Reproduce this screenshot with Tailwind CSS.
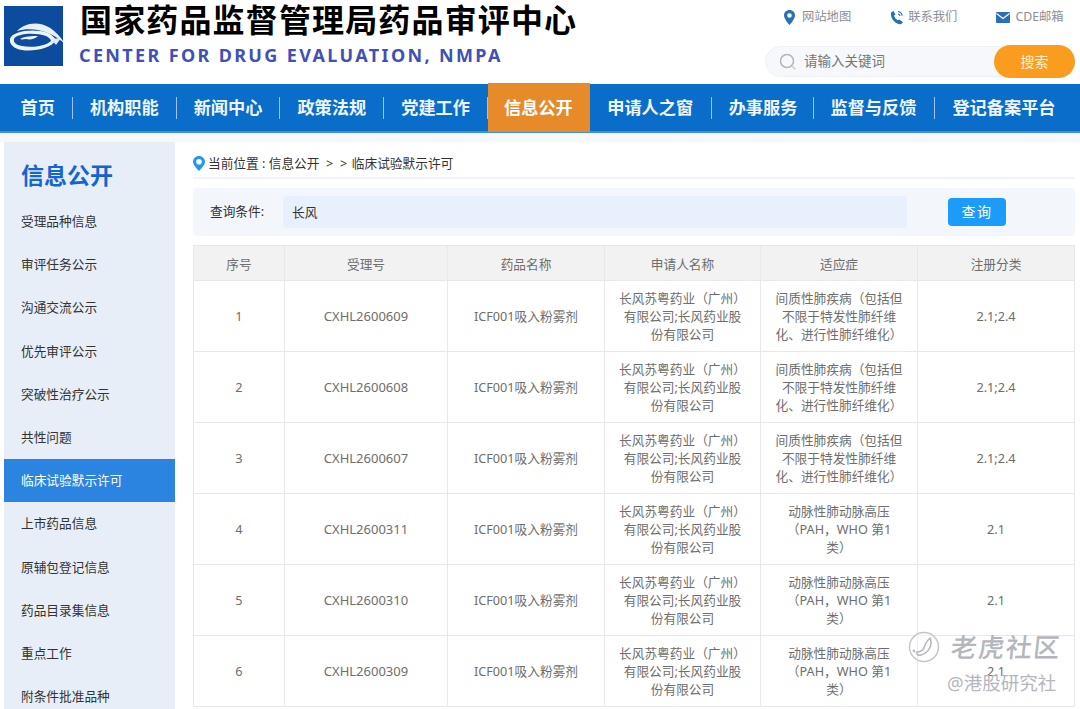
<!DOCTYPE html>
<html lang="zh-CN">
<head>
  <meta charset="UTF-8" />
  <meta name="viewport" content="width=device-width, initial-scale=1" />
  <title>国家药品监督管理局药品审评中心</title>
  <script src="https://cdn.jsdelivr.net/npm/@tailwindcss/browser@4"></script>
</head>
<body class="relative h-[709px] overflow-hidden bg-white font-['Noto_Sans','Noto_Sans_CJK_SC',sans-serif] text-[12.700px] text-[#333]">

  <!-- Header -->
  <header class="flex h-[84px] justify-between">
    <div class="flex pl-1 pt-1.5">
      <svg class="h-[60px] w-[59px] shrink-0 overflow-visible" viewBox="0 0 59 60">
        <rect width="59" height="60" fill="#0d4b9f" />
        <path d="M13 25C22 15 45 11 61 38 48 26 30 20 13 25z" fill="#e8eff7" />
        <path fill-rule="evenodd" d="M6 33C8 25 30 22 44 27c4 2 6 4 8 7-4 8-22 12-34 10C10 43 5 38 6 33zm4 0c2-5 20-7 32-3 4 2 5 4 5 5-5 5-19 7-29 5-6-1-9-4-8-7z" fill="#eef3f8" />
        <path d="M47 33l10-1-5 7z" fill="#dfe8f2" />
        <path d="M16 33c5-3 12-3 18-3-3 3-8 4-12 3-2 0-4 1-6 0z" fill="#eef3f8" />
      </svg>
      <div class="pl-[17px]">
        <div class="-mt-[5px] text-[32px] leading-[38px] font-bold tracking-[1.150px] text-black">国家药品监督管理局药品审评中心</div>
        <div class="mt-[4px] -ml-px text-[18px] leading-[24px] font-bold tracking-[2.350px] text-[#3f51b5]">CENTER FOR DRUG EVALUATION, NMPA</div>
      </div>
    </div>
    <div class="flex w-[315px] flex-col pr-[5px]">
      <div class="flex h-[46px] items-start pt-2 text-[12.300px] text-[#8a8f99]">
        <span class="ml-[19px] flex items-center gap-[7px]">
          <svg class="h-[15px] w-[11px]" viewBox="0 0 11 15"><path fill-rule="evenodd" d="M5.500 0C2.400 0 0 2.400 0 5.400 0 9 5.500 15 5.500 15S11 9 11 5.400C11 2.400 8.600 0 5.500 0zm0 3.200a2.300 2.300 0 1 1 0 4.600 2.300 2.300 0 0 1 0-4.600z" fill="#2a70b8"/></svg>
          网站地图
        </span>
        <span class="ml-[39px] flex items-center gap-1">
          <svg class="h-[15px] w-[14px]" viewBox="0 0 14 15"><path d="M1 2.500 3.500 1l2 3.500-1.500 1.200c.6 1.800 1.800 3.300 3.700 4.500L9.300 9.500l3.700 2.700-2 2C5.500 14.500 0 8.500 1 2.500z" fill="#2a70b8"/><path d="M8 1.500c2.200.3 3.800 2 4.200 4.200M8 4c1 .2 1.800 1 2 2" fill="none" stroke="#2a70b8" stroke-width="1.200"/></svg>
          联系我们
        </span>
        <span class="ml-[39px] flex items-center gap-[5px]">
          <svg class="h-[11px] w-[14px]" viewBox="0 0 14 11"><rect width="14" height="11" rx="1" fill="#2a70b8"/><path d="M.5 1.500 7 6.500l6.500-5" fill="none" stroke="#fff" stroke-width="1.200"/></svg>
          CDE邮箱
        </span>
      </div>
      <div class="flex h-[31px] items-center justify-between rounded-full border border-[#eef1f5] bg-[#f6f8fb]">
        <div class="flex items-center">
          <svg class="ml-[13px] h-[18px] w-[18px]" viewBox="0 0 18 18"><circle cx="8" cy="8" r="6.500" fill="none" stroke="#b5b5b5" stroke-width="1.500"/><path d="M13 13l3.500 3.500" stroke="#cfcfcf" stroke-width="1.500"/></svg>
          <span class="ml-[7px] text-[13.500px] text-[#777]">请输入关键词</span>
        </div>
        <button class="-mr-px h-[33px] w-[81px] rounded-full bg-[#fa9d1e] text-sm text-[#fdf1dc]">搜索</button>
      </div>
    </div>
  </header>

  <!-- Nav -->
  <nav class="flex h-[49px] items-center border-b-2 border-[#3f8fdc] bg-[#0a6dca] pl-[3.500px] text-[17.200px] leading-[49px] font-bold text-[#eef5fc]">
    <a class="px-[17px]">首页</a><i class="h-[22px] w-px bg-white/60"></i>
    <a class="px-[17px]">机构职能</a><i class="h-[22px] w-px bg-white/60"></i>
    <a class="px-[17px]">新闻中心</a><i class="h-[22px] w-px bg-white/60"></i>
    <a class="px-[17px]">政策法规</a><i class="h-[22px] w-px bg-white/60"></i>
    <a class="px-[17px]">党建工作</a><i class="h-[22px] w-px bg-white/60"></i>
    <a class="h-[49px] bg-[#e68a2a] pr-[17px] pl-[16px] text-white">信息公开</a>
    <a class="px-[17.500px]">申请人之窗</a><i class="h-[22px] w-px bg-white/60"></i>
    <a class="pr-[16px] pl-[17px]">办事服务</a><i class="h-[22px] w-px bg-white/60"></i>
    <a class="pr-[18px] pl-[16px]">监督与反馈</a><i class="h-[22px] w-px bg-white/60"></i>
    <a class="px-[17px]">登记备案平台</a>
  </nav>

  <div class="h-[9px] bg-[#f5f9fe]"></div>

  <main class="flex pl-1">
    <!-- Sidebar -->
    <aside class="h-[567px] w-[171px] shrink-0 overflow-hidden bg-[#e7eef8]">
      <h2 class="h-[58px] pl-[17px] text-[23px] leading-[67px] font-bold text-[#1565d0]">信息公开</h2>
      <ul class="[&>li]:h-[43.200px] [&>li]:pl-[17px] [&>li]:leading-[43.200px]">
        <li>受理品种信息</li>
        <li>审评任务公示</li>
        <li>沟通交流公示</li>
        <li>优先审评公示</li>
        <li>突破性治疗公示</li>
        <li>共性问题</li>
        <li class="bg-[#2b84e0] text-white">临床试验默示许可</li>
        <li>上市药品信息</li>
        <li>原辅包登记信息</li>
        <li>药品目录集信息</li>
        <li>重点工作</li>
        <li>附条件批准品种</li>
      </ul>
    </aside>

    <!-- Content -->
    <section class="ml-[18px] w-[882px]">
      <div class="flex h-[37px] items-start gap-[3px] border-b-2 border-[#f3f4f6] pt-[12px] leading-[19px]">
        <svg class="mt-[2px] h-[15px] w-[12px]" viewBox="0 0 12 15"><path fill-rule="evenodd" d="M6 0C2.700 0 0 2.600 0 5.800 0 9.500 6 15 6 15s6-5.500 6-9.200C12 2.600 9.300 0 6 0zm0 3a2.800 2.800 0 1 1 0 5.600A2.800 2.800 0 0 1 6 3z" fill="#2196f3"/></svg>
        <span class="whitespace-pre">当前位置 : 信息公开  &gt;  &gt;  <span class="-ml-0.5">临床试验默示许可</span></span>
      </div>

      <div class="mt-[9px] flex h-[48px] items-center rounded-sm bg-[#f3f6fb] pl-[17px]">
        <span class="w-[73px]">查询条件:</span>
        <div class="h-[32px] w-[624px] rounded-sm bg-[#e8f0fd] pl-[9px] leading-[32px]">长风</div>
        <button class="ml-[41px] h-[28px] w-[58px] rounded-sm bg-[#1c9bfb] text-sm tracking-[1.500px] text-white">查询</button>
      </div>

      <table class="mt-[9px] w-[881px] table-fixed border-collapse text-center text-[#6e6e6e] [&_td]:border [&_td]:border-[#e8e8e8] [&_td]:px-[13px] [&_td]:leading-[18px] [&_th]:border [&_th]:border-[#e8e8e8] [&_th]:pt-[3px] [&_th]:font-normal">
        <colgroup>
          <col class="w-[91px]" /><col class="w-[163px]" /><col class="w-[157px]" /><col class="w-[156px]" /><col class="w-[157px]" /><col class="w-[157px]" />
        </colgroup>
        <thead>
          <tr class="h-[35px] bg-[#f2f2f2]"><th>序号</th><th>受理号</th><th>药品名称</th><th>申请人名称</th><th>适应症</th><th>注册分类</th></tr>
        </thead>
        <tbody>
          <tr class="h-[71px]"><td>1</td><td class="text-[13px]">CXHL2600609</td><td>ICF001吸入粉雾剂</td><td>长风苏粤药业（广州）有限公司;长风药业股份有限公司</td><td>间质性肺疾病（包括但不限于特发性肺纤维化、进行性肺纤维化）</td><td>2.1;2.4</td></tr>
          <tr class="h-[71px]"><td>2</td><td class="text-[13px]">CXHL2600608</td><td>ICF001吸入粉雾剂</td><td>长风苏粤药业（广州）有限公司;长风药业股份有限公司</td><td>间质性肺疾病（包括但不限于特发性肺纤维化、进行性肺纤维化）</td><td>2.1;2.4</td></tr>
          <tr class="h-[71px]"><td>3</td><td class="text-[13px]">CXHL2600607</td><td>ICF001吸入粉雾剂</td><td>长风苏粤药业（广州）有限公司;长风药业股份有限公司</td><td>间质性肺疾病（包括但不限于特发性肺纤维化、进行性肺纤维化）</td><td>2.1;2.4</td></tr>
          <tr class="h-[71px]"><td>4</td><td class="text-[13px]">CXHL2600311</td><td>ICF001吸入粉雾剂</td><td>长风苏粤药业（广州）有限公司;长风药业股份有限公司</td><td>动脉性肺动脉高压<br />（PAH，WHO 第1<br />类）</td><td>2.1</td></tr>
          <tr class="h-[71px]"><td>5</td><td class="text-[13px]">CXHL2600310</td><td>ICF001吸入粉雾剂</td><td>长风苏粤药业（广州）有限公司;长风药业股份有限公司</td><td>动脉性肺动脉高压<br />（PAH，WHO 第1<br />类）</td><td>2.1</td></tr>
          <tr class="h-[71px]"><td>6</td><td class="text-[13px]">CXHL2600309</td><td>ICF001吸入粉雾剂</td><td>长风苏粤药业（广州）有限公司;长风药业股份有限公司</td><td>动脉性肺动脉高压<br />（PAH，WHO 第1<br />类）</td><td>2.1</td></tr>
        </tbody>
      </table>
    </section>
  </main>

  <!-- Watermark -->
  <div class="pointer-events-none absolute top-[630px] left-[908px] w-[160px] text-[#b4b6bd]">
    <div class="flex items-center">
      <svg class="h-[32px] w-[32px]" viewBox="0 0 32 32"><circle cx="16" cy="16" r="14.500" fill="#fff" fill-opacity=".45" stroke="#c4c6cb" stroke-width="1.500"/><path d="M22 7c3 6-1 15-9 17-3 1-5-1-4-3 4 0 7-3 8-7 1-3 3-5 5-7z" fill="none" stroke="#b4b6bd" stroke-width="1.500"/><path d="M5 19l2 2" stroke="#b4b6bd" stroke-width="2"/></svg>
      <span class="ml-[11px] -skew-x-6 text-[26px] leading-[34px] font-medium tracking-[1.500px]">老虎社区</span>
    </div>
    <div class="mt-[7px] pl-[39px] text-[18.500px] leading-[24px] whitespace-nowrap">@港股研究社</div>
  </div>
</body>
</html>
